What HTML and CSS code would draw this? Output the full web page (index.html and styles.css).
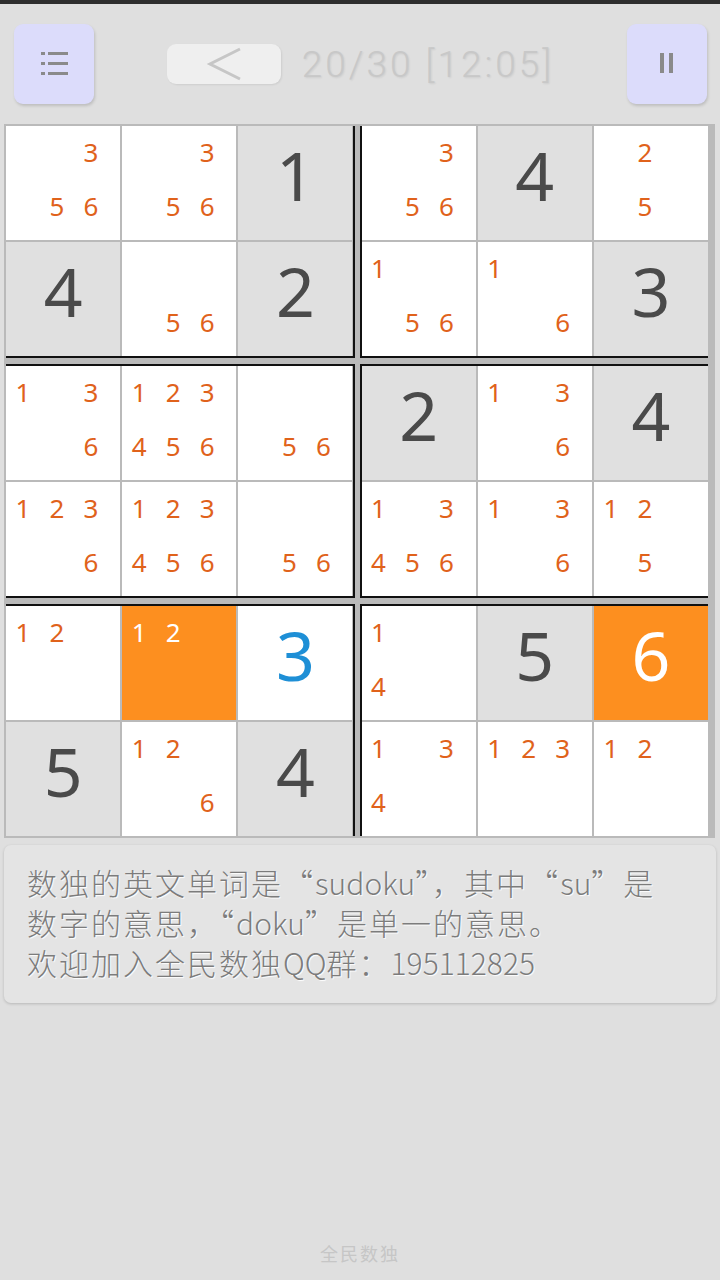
FILE: index.html
```html
<!DOCTYPE html>
<html lang="zh-CN">
<head>
    <meta charset="UTF-8">
    <meta name="viewport" content="width=device-width, initial-scale=1.0">
    <title>全民数独</title>
    <link rel="stylesheet" href="styles.css">
</head>
<body>
    <div class="statusbar"></div>

    <div class="toolbar">
        <button class="tool-btn" aria-label="menu">
            <svg width="80" height="80" viewBox="0 0 80 80">
                <g fill="#8a8a8a">
                    <rect x="27" y="28" width="4" height="3"/>
                    <rect x="34" y="28" width="20" height="3"/>
                    <rect x="27" y="38" width="4" height="3"/>
                    <rect x="34" y="38" width="20" height="3"/>
                    <rect x="27" y="48" width="4" height="3"/>
                    <rect x="34" y="48" width="20" height="3"/>
                </g>
            </svg>
        </button>
        <div class="progress">
            <button class="back-btn" aria-label="back">
                <svg width="114" height="40" viewBox="0 0 114 40">
                    <polyline points="73,5 43,20 73,35" fill="none" stroke="#c6c6c6" stroke-width="3"/>
                </svg>
            </button>
            <span class="counter">20/30 [12:05]</span>
        </div>
        <button class="tool-btn" aria-label="pause">
            <svg width="80" height="80" viewBox="0 0 80 80">
                <g fill="#8a8a8a">
                    <rect x="33" y="29" width="4" height="20"/>
                    <rect x="42" y="29" width="4" height="20"/>
                </g>
            </svg>
        </button>
    </div>

    <div class="board" id="board"></div>

    <p class="tip">数独的英文单词是“<span class="latin">sudoku</span>”，其中“<span class="latin">su</span>”是<br>数字的意思，“<span class="latin">doku</span>”是单一的意思。<br>欢迎加入全民数独<span class="latin">QQ</span>群：<span class="latin">195112825</span></p>

    <div class="footer">全民数独</div>

    <script>
        // g = given, u = entered by player, S = selected with value, s = selected with notes
        const rows = [
            ['356', '356', 'g1', '356', 'g4', '25'],
            ['g4', '56', 'g2', '156', '16', 'g3'],
            ['136', '123456', '56', 'g2', '136', 'g4'],
            ['1236', '123456', '56', '13456', '136', '125'],
            ['12', 's12', 'u3', '14', 'g5', 'S6'],
            ['g5', '126', 'g4', '134', '123', '12']
        ];

        function makeCell(value) {
            const cell = document.createElement('div');
            cell.className = 'cell';
            const kind = 'gusS'.includes(value[0]) ? value[0] : '';
            const digits = kind ? value.slice(1) : value;

            if (kind === 'g') cell.classList.add('given');
            if (kind === 'u') cell.classList.add('entered');
            if (kind === 'S' || kind === 's') cell.classList.add('selected');

            if (kind === 'g' || kind === 'u' || kind === 'S') {
                cell.classList.add('value');
                cell.textContent = digits;
            } else {
                cell.classList.add('notes');
                for (let d = 1; d <= 6; d++) {
                    const span = document.createElement('span');
                    span.textContent = digits.includes(String(d)) ? d : '';
                    cell.appendChild(span);
                }
            }
            return cell;
        }

        const board = document.getElementById('board');
        const bands = ['top', 'middle', 'bottom'];
        for (let br = 0; br < 3; br++) {
            for (let bc = 0; bc < 2; bc++) {
                const box = document.createElement('div');
                box.className = 'box ' + (bc ? 'right' : 'left') + ' ' + bands[br];
                for (let r = br * 2; r < br * 2 + 2; r++) {
                    for (let c = bc * 3; c < bc * 3 + 3; c++) {
                        box.appendChild(makeCell(rows[r][c]));
                    }
                }
                board.appendChild(box);
            }
        }
    </script>
</body>
</html>
```

FILE: styles.css
```css
/* Reset */
* {
    margin: 0;
    padding: 0;
    box-sizing: border-box;
}

body {
    display: flex;
    flex-direction: column;
    height: 100vh;
    background: #dfdfdf;
    font-family: 'Noto Sans', 'Noto Sans CJK SC', sans-serif;
}

.statusbar {
    height: 4px;
    background: #2e2e2e;
}

/* Top toolbar */
.toolbar {
    display: flex;
    justify-content: space-between;
    align-items: center;
    height: 120px;
    padding: 0 13px 0 14px;
}

.tool-btn {
    width: 80px;
    height: 80px;
    border: none;
    border-radius: 9px;
    background: #dcdcfb;
    box-shadow: 1px 2px 3px rgba(0, 0, 0, 0.15);
}

.tool-btn svg,
.back-btn svg {
    display: block;
}

.progress {
    display: flex;
    align-items: center;
    gap: 21px;
}

.back-btn {
    width: 114px;
    height: 40px;
    border: none;
    border-radius: 9px;
    background: #efefef;
    box-shadow: 1px 1px 2px rgba(0, 0, 0, 0.08);
}

.counter {
    font-family: 'Roboto', sans-serif;
    font-weight: 300;
    font-size: 37px;
    letter-spacing: 3px;
    color: #c8c8c8;
    text-shadow: 1px 1px 2px rgba(0, 0, 0, 0.08);
}

/* Sudoku board */
.board {
    display: grid;
    grid-template-columns: 1fr 1fr;
    column-gap: 5px;
    row-gap: 6px;
    margin: 0 5px 0 4px;
    padding: 2px 7px 2px 2px;
    background: #bababa;
}

.box {
    display: grid;
    grid-template-columns: repeat(3, 1fr);
    grid-auto-rows: 114px;
    gap: 2px;
    background: #bababa;
}

.box.left {
    border-right: 2px solid #111;
}

.box.right {
    border-left: 2px solid #111;
}

.box.top {
    border-bottom: 2px solid #111;
}

.box.middle {
    border-top: 2px solid #111;
    border-bottom: 2px solid #111;
}

.box.bottom {
    border-top: 2px solid #111;
}

.cell {
    background: #fff;
    overflow: hidden;
}

.cell.value {
    display: flex;
    justify-content: center;
    align-items: center;
    padding-bottom: 18px;
    font-size: 68px;
    color: #4a4a4a;
}

.cell.given {
    background: #e0e0e0;
}

.cell.entered {
    color: #1e8fd6;
}

.cell.selected {
    background: #fd8f1f;
    color: #fff;
}

/* Pencil marks */
.cell.notes {
    display: grid;
    grid-template-columns: repeat(3, 34px);
    grid-template-rows: repeat(2, 54px);
    font-size: 26px;
    line-height: 52px;
    text-align: center;
    color: #e0621b;
}

.cell.selected.notes {
    color: #fff;
}

/* Tip box */
.tip {
    margin: 7px 4px 0 4px;
    padding: 17px 10px 21px 23px;
    border-radius: 7px;
    background: #e4e4e4;
    box-shadow: 0 1px 3px rgba(0, 0, 0, 0.18);
    font-family: 'Noto Sans CJK SC', sans-serif;
    font-weight: 300;
    font-size: 30px;
    letter-spacing: 2px;
    line-height: 40px;
    color: #7c7c7c;
    text-shadow: 1px 1px 1px #fff;
    white-space: nowrap;
}

.tip .latin {
    letter-spacing: 0;
}

.footer {
    margin-top: auto;
    padding-bottom: 15px;
    text-align: center;
    font-family: 'Noto Sans CJK SC', sans-serif;
    font-size: 18px;
    letter-spacing: 2px;
    line-height: 24px;
    color: #c6c6c6;
}
```
